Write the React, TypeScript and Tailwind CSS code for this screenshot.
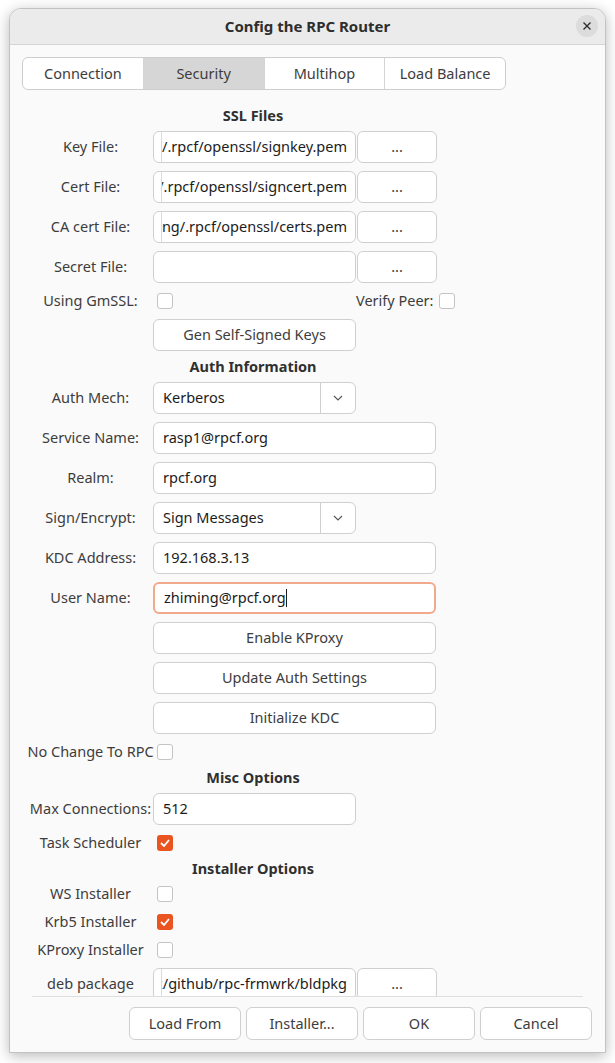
import type { ReactNode } from "react";

const font = { fontFamily: '"Noto Sans", "DejaVu Sans", sans-serif' };

function Label({ children }: { children: ReactNode }) {
  return (
    <div className="w-[125px] shrink-0 flex justify-center items-center text-[#3d3d3d] whitespace-nowrap">
      <span>{children}</span>
    </div>
  );
}

function Heading({ children }: { children: ReactNode }) {
  return (
    <div className="w-[450px] text-center font-bold leading-[15px] text-[#303030]">{children}</div>
  );
}

function TextInput({ value, wide, focused }: { value: string; wide?: boolean; focused?: boolean }) {
  return (
    <div
      className={
        (wide ? "w-[283px] " : "w-[203px] ") +
        "h-[32px] rounded-[6px] bg-white flex items-center px-[9px] text-[#1c1c1c] " +
        (focused ? "border-2 border-[#f1a98c] px-[8px]" : "border border-[#cfcfcf]")
      }
    >
      <span className="whitespace-nowrap">{value}</span>
      {focused && <span className="w-px h-[18px] bg-[#1c1c1c]" />}
    </div>
  );
}

function PathInput({ value }: { value: string }) {
  return (
    <div className="w-[203px] h-[32px] rounded-[6px] bg-white border border-[#cfcfcf] flex pl-[7px] pr-[8px] text-[#1c1c1c]">
      <div className="flex-1 overflow-hidden border-l border-[#dadada] flex justify-end items-center">
        <span className="whitespace-nowrap">{value}</span>
      </div>
    </div>
  );
}

function Button({ children, className }: { children: ReactNode; className: string }) {
  return (
    <div
      className={
        "h-[32px] rounded-[6px] bg-white border border-[#cfcfcf] flex items-center justify-center text-[#3d3d3d] " +
        className
      }
    >
      {children}
    </div>
  );
}

function Combo({ value }: { value: string }) {
  return (
    <div className="w-[203px] h-[32px] rounded-[6px] bg-white border border-[#cfcfcf] flex text-[#1c1c1c]">
      <div className="flex-1 flex items-center pl-[9px]">{value}</div>
      <div className="w-[35px] border-l border-[#cfcfcf] flex items-center justify-center">
        <svg width="10" height="6" viewBox="0 0 10 6" fill="none">
          <path d="M1 1l4 4 4-4" stroke="#555" strokeWidth="1.1" />
        </svg>
      </div>
    </div>
  );
}

function Check({ checked }: { checked?: boolean }) {
  return checked ? (
    <div className="w-[16px] h-[16px] rounded-[3px] bg-[#e95420] flex items-center justify-center">
      <svg width="10" height="8" viewBox="0 0 10 8" fill="none">
        <path d="M1 4l3 3 5-6" stroke="#fff" strokeWidth="1.8" />
      </svg>
    </div>
  ) : (
    <div className="w-[16px] h-[16px] rounded-[3px] bg-white border border-[#c4c4c4]" />
  );
}

function Row({ children, h = "h-[32px]" }: { children: ReactNode; h?: string }) {
  return <div className={"flex items-center " + h}>{children}</div>;
}

function CheckRow({ label, checked }: { label: string; checked?: boolean }) {
  return (
    <Row h="h-[20px]">
      <Label>{label}</Label>
      <div className="ml-[4px]">
        <Check checked={checked} />
      </div>
    </Row>
  );
}

const tabs = ["Connection", "Security", "Multihop", "Load Balance"];

export default function App() {
  return (
    <div className="w-[615px] h-[1063px] bg-white pt-[8px] pl-[9px] text-[14.5px]" style={font}>
      <div className="w-[597px] h-[1045px] rounded-t-[12px] border border-[#c2c2c2] bg-[#fafafa] shadow-[0_3px_14px_rgba(0,0,0,0.28)] flex flex-col overflow-hidden">
        {/* header */}
        <div className="h-[36px] shrink-0 bg-[#ebebeb] border-b border-[#d4d4d4] relative flex items-center justify-center">
          <span className="font-bold text-[15px] text-[#2e2e2e]">Config the RPC Router</span>
          <div className="absolute right-[7px] top-[6px] w-[22px] h-[22px] rounded-full bg-[#dcdcdc] flex items-center justify-center">
            <svg width="8" height="8" viewBox="0 0 8 8">
              <path d="M0.5 0.5l7 7M7.5 0.5l-7 7" stroke="#2e2e2e" strokeWidth="1.4" />
            </svg>
          </div>
        </div>

        {/* tabs */}
        <div className="pt-[12px] px-[12px]">
          <div className="w-[484px] h-[33px] flex rounded-[6px] border border-[#cdcdcd] bg-white overflow-hidden text-[#3d3d3d]">
            {tabs.map((t, i) => (
              <div
                key={t}
                className={
                  "flex-1 flex items-center justify-center " +
                  (i > 0 ? "border-l border-[#d4d4d4] " : "") +
                  (t === "Security" ? "bg-[#d6d6d6]" : "")
                }
              >
                {t}
              </div>
            ))}
          </div>
        </div>

        {/* scroll area */}
        <div className="mt-[8px] h-[898px] shrink-0 overflow-hidden pl-[18px]">
          <div className="flex flex-col gap-2 pt-[10px]">
            <Heading>SSL Files</Heading>
            <Row>
              <Label>Key File:</Label>
              <PathInput value="ing/.rpcf/openssl/signkey.pem" />
              <Button className="w-[80px] ml-px">...</Button>
            </Row>
            <Row>
              <Label>Cert File:</Label>
              <PathInput value="ing/.rpcf/openssl/signcert.pem" />
              <Button className="w-[80px] ml-px">...</Button>
            </Row>
            <Row>
              <Label>CA cert File:</Label>
              <PathInput value="ming/.rpcf/openssl/certs.pem" />
              <Button className="w-[80px] ml-px">...</Button>
            </Row>
            <Row>
              <Label>Secret File:</Label>
              <div className="w-[203px] h-[32px] rounded-[6px] bg-white border border-[#cfcfcf]" />
              <Button className="w-[80px] ml-px">...</Button>
            </Row>
            <Row h="h-[20px]">
              <Label>Using GmSSL:</Label>
              <div className="ml-[4px] w-[199px]">
                <Check />
              </div>
              <div className="flex items-center whitespace-nowrap">
                <span className="text-[#3d3d3d]">Verify Peer:</span>
                <div className="ml-[6px]">
                  <Check />
                </div>
              </div>
            </Row>
            <Row>
              <Label>{""}</Label>
              <Button className="w-[203px]">Gen Self-Signed Keys</Button>
            </Row>

            <Heading>Auth Information</Heading>
            <Row>
              <Label>Auth Mech:</Label>
              <Combo value="Kerberos" />
            </Row>
            <Row>
              <Label>Service Name:</Label>
              <TextInput value="rasp1@rpcf.org" wide />
            </Row>
            <Row>
              <Label>Realm:</Label>
              <TextInput value="rpcf.org" wide />
            </Row>
            <Row>
              <Label>Sign/Encrypt:</Label>
              <Combo value="Sign Messages" />
            </Row>
            <Row>
              <Label>KDC Address:</Label>
              <TextInput value="192.168.3.13" wide />
            </Row>
            <Row>
              <Label>User Name:</Label>
              <TextInput value="zhiming@rpcf.org" wide focused />
            </Row>
            <Row>
              <Label>{""}</Label>
              <Button className="w-[283px]">Enable KProxy</Button>
            </Row>
            <Row>
              <Label>{""}</Label>
              <Button className="w-[283px]">Update Auth Settings</Button>
            </Row>
            <Row>
              <Label>{""}</Label>
              <Button className="w-[283px]">Initialize KDC</Button>
            </Row>
            <CheckRow label="No Change To RPC" />

            <Heading>Misc Options</Heading>
            <Row>
              <Label>Max Connections:</Label>
              <TextInput value="512" />
            </Row>
            <CheckRow label="Task Scheduler" checked />

            <Heading>Installer Options</Heading>
            <CheckRow label="WS Installer" />
            <CheckRow label="Krb5 Installer" checked />
            <CheckRow label="KProxy Installer" />
            <Row>
              <Label>deb package</Label>
              <PathInput value="rk/github/rpc-frmwrk/bldpkg" />
              <Button className="w-[80px] ml-px">...</Button>
            </Row>
          </div>
        </div>
        <div className="ml-[22px] mr-[22px] h-px shrink-0 bg-[#dedede]" />

        {/* footer buttons */}
        <div className="pt-[10px] pr-[13px] flex justify-end gap-[5px]">
          <Button className="w-[112px] h-[33px]">Load From</Button>
          <Button className="w-[112px] h-[33px]">Installer...</Button>
          <Button className="w-[112px] h-[33px]">OK</Button>
          <Button className="w-[112px] h-[33px]">Cancel</Button>
        </div>
      </div>
    </div>
  );
}
